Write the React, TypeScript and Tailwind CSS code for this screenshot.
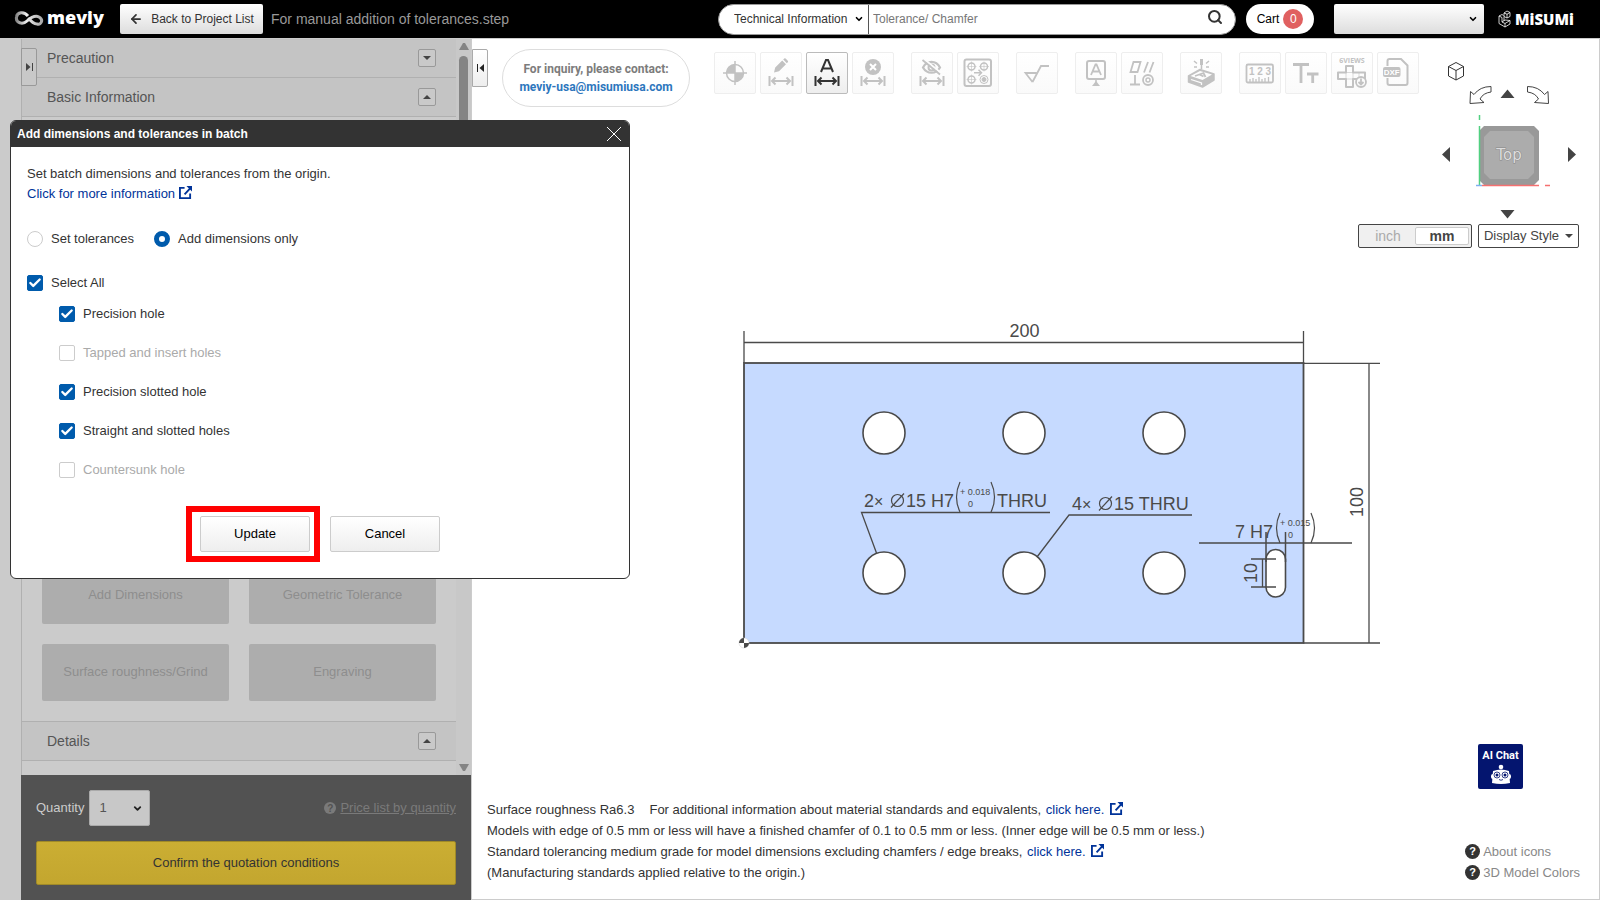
import { useState } from "react";
import type { ReactNode } from "react";
import { ArrowLeft, Check, ChevronDown, Search } from "lucide-react";

type Tool = {
	name: string;
	icon: ReactNode;
	active?: boolean;
};

type HoleOption = {
	id: string;
	label: string;
	disabled?: boolean;
};

const dimArrow = (
	<g strokeWidth="2">
		<path d="M9.5 24v10M32.5 24v10M12 29h18" />
		<path d="M15.5 25.5L12 29l3.5 3.5M26.5 25.5L30 29l-3.5 3.5" />
	</g>
);

const toolGroups: Tool[][] = [
	[
		{
			name: "Origin",
			icon: (
				<>
					<circle cx="21" cy="21" r="8.5" strokeWidth="1.5" />
					<path d="M21 9v24M9 21h24" strokeWidth="1.5" />
					<path
						d="M21 21V12.500A8.500 8.500 0 0 0 12.500 21zM21 21v8.500A8.500 8.500 0 0 0 29.500 21z"
						fill="currentColor"
						stroke="none"
					/>
				</>
			),
		},
		{
			name: "Edit dimension",
			icon: (
				<>
					<path
						d="M14 20.500l1.200-5 7-7 3.800 3.800-7 7zM23.200 7.600l1-1a1 1 0 0 1 1.400 0l2.200 2.200a1 1 0 0 1 0 1.400l-1 1z"
						fill="currentColor"
						stroke="none"
					/>
					{dimArrow}
				</>
			),
		},
		{
			name: "Add dimensions in batch",
			active: true,
			icon: (
				<>
					<path d="M15 20l5-12h2l5 12M16.500 16.500h9" strokeWidth="2" />
					{dimArrow}
				</>
			),
		},
		{
			name: "Delete dimension",
			icon: (
				<>
					<circle cx="21" cy="15" r="8" fill="currentColor" stroke="none" />
					<path
						d="M18 12l6 6M24 12l-6 6"
						className="stroke-white"
						strokeWidth="2"
					/>
					{dimArrow}
				</>
			),
		},
	],
	[
		{
			name: "Hide dimension",
			icon: (
				<>
					<path
						d="M12 15.500c4-7.500 13-7.500 17 0c-4 7-13 7-17 0z"
						strokeWidth="2.200"
					/>
					<circle cx="20.500" cy="15.500" r="3" strokeWidth="2" />
					<path d="M13 7l17 14" className="stroke-[#fdfdfd]" strokeWidth="1.800" />
					<path d="M11.500 8L29 22.500" strokeWidth="1.800" />
					{dimArrow}
				</>
			),
		},
		{
			name: "Hole groups",
			icon: (
				<>
					<rect x="7.500" y="7.500" width="26.500" height="26.500" rx="2" strokeWidth="2" />
					<circle cx="14.500" cy="14.500" r="3.500" strokeWidth="1.500" />
					<circle cx="27" cy="14.500" r="3.500" strokeWidth="1.500" />
					<circle cx="14.500" cy="27.500" r="3.500" strokeWidth="1.500" />
					<circle cx="27" cy="27.500" r="4" strokeWidth="1" />
					<circle cx="27" cy="27.500" r="2" fill="currentColor" strokeWidth="1" />
					<path
						d="M14.500 9.500v10M9.500 14.500h10M27 9.500v10M22 14.500h10M14.500 22.500v10M9.500 27.500h10"
						strokeWidth=".6"
					/>
					<path d="M17 20.700h7M21.500 17.700l3 3-3 3" strokeWidth="1.500" />
				</>
			),
		},
	],
	[
		{
			name: "Surface roughness",
			icon: <path d="M16.500 30L9.500 21h11M16.500 30L25 14h8" strokeWidth="1.800" />,
		},
	],
	[
		{
			name: "Datum",
			icon: (
				<>
					<rect x="12" y="9" width="18" height="18" rx="2" strokeWidth="2" />
					<path d="M16 23l4.500-10.500h1L26 23M17.500 19.500h7" strokeWidth="1.800" />
					<path d="M21 27v3" strokeWidth="1.500" />
					<path d="M21 29l4 5h-8z" fill="currentColor" stroke="none" />
				</>
			),
		},
		{
			name: "Geometric tolerance",
			icon: (
				<>
					<path
						d="M12.500 10h7l-3 10h-7zM27 10l-4 10.500M32.500 10l-4 10.500M9 32.500h10M14 32.500V23"
						strokeWidth="1.800"
					/>
					<circle cx="27" cy="28" r="5" strokeWidth="1.800" />
					<circle cx="27" cy="28" r="2" strokeWidth="1.500" />
				</>
			),
		},
	],
	[
		{
			name: "Engraving",
			icon: (
				<>
					<path
						d="M8.500 24L20 17.500l14 4.500v6l-11.500 7-14-5z"
						fill="currentColor"
						strokeWidth="1.500"
						strokeLinejoin="round"
					/>
					<path d="M10.500 24L20 19l12 3.500-9.500 5.500z" className="fill-[#fdfdfd]" stroke="none" />
					<path d="M11 27.500l10.500 3.500v2" className="stroke-[#fdfdfd]" strokeWidth="1.300" />
					<path d="M15 24l8.500-3 2 4M19.500 22.500l4 2" strokeWidth="1.800" />
					<path d="M21.500 7v6" strokeWidth="3" />
					<path
						d="M21.500 12v5M17 11.500l-3-2.500M26 11.500l3-2.500M17 15h-3M26 15h3"
						strokeWidth="1.500"
					/>
				</>
			),
		},
	],
	[
		{
			name: "Numeric values",
			icon: (
				<>
					<rect x="7.500" y="12.500" width="26.500" height="18" rx="1.500" strokeWidth="1.800" />
					<text
						x="21"
						y="23"
						textAnchor="middle"
						className="fill-current font-['Liberation_Sans'] text-[10px] font-bold"
						stroke="none"
					>
						1 2 3
					</text>
					<path
						d="M11 30v-3M14 30v-4M17 30v-3M20 30v-5M23 30v-3M26 30v-4M29.500 30v-5"
						strokeWidth="1.300"
					/>
				</>
			),
		},
		{
			name: "Text size",
			icon: (
				<path d="M8 12.500h16M16 12.500V31M22 22h11.500M27.700 22v9" strokeWidth="2.800" />
			),
		},
		{
			name: "Six views",
			icon: (
				<>
					<text
						x="21"
						y="11"
						textAnchor="middle"
						className="fill-current font-['Open_Sans'] text-[7px] font-bold"
						stroke="none"
					>
						6VIEWS
					</text>
					<path
						d="M15 14h7v6.500h12V27H22v8h-7v-8H7v-6.500h8z"
						strokeWidth="2"
						strokeLinejoin="round"
					/>
					<path d="M15 20.500h7V27h-7zM28 20.500V27" strokeWidth=".6" />
					<circle
						cx="30"
						cy="30"
						r="5"
						className="fill-[#fbfbfb]"
						strokeWidth="1.800"
					/>
					<path d="M30 26.500v6M27.500 30l2.500 2.500 2.500-2.500" strokeWidth="1.800" />
				</>
			),
		},
		{
			name: "Export DXF",
			icon: (
				<>
					<path
						d="M10.500 14V9q0-2 2-2H24l6.500 6.500V31q0 2-2 2h-16q-2 0-2-2v-5"
						strokeWidth="2"
					/>
					<rect x="6" y="15" width="17.500" height="10" rx="2" fill="currentColor" stroke="none" />
					<text
						x="14.700"
						y="23"
						textAnchor="middle"
						className="fill-white font-['Liberation_Sans'] text-[8px] font-bold"
						stroke="none"
					>
						DXF
					</text>
				</>
			),
		},
	],
];

const holeOptions: HoleOption[] = [
	{ id: "precision", label: "Precision hole" },
	{ id: "tapped", label: "Tapped and insert holes", disabled: true },
	{ id: "slotted", label: "Precision slotted hole" },
	{ id: "straight", label: "Straight and slotted holes" },
	{ id: "countersunk", label: "Countersunk hole", disabled: true },
];

const holes = [
	[884, 433],
	[1024, 433],
	[1164, 433],
	[884, 573],
	[1024, 573],
	[1164, 573],
];

function ExternalIcon({ className }: { className: string }) {
	return (
		<svg
			viewBox="0 0 14 14"
			className={`inline-block size-[13px] align-[-1px] ${className}`}
			fill="none"
			stroke="currentColor"
			strokeWidth="2"
		>
			<path d="M6 2H1v11h11V8M6 9l6-6.500" />
			<path d="M8 0h6v6z" fill="currentColor" stroke="none" />
		</svg>
	);
}

function HelpIcon({ className }: { className: string }) {
	return (
		<span
			className={`flex items-center justify-center rounded-full font-bold ${className}`}
		>
			?
		</span>
	);
}

function Header() {
	return (
		<header className="flex h-[39px] shrink-0 items-center border-b border-[#ccc] bg-black">
			<a href="#" className="ml-[14px] flex items-center gap-[3px] text-white">
				<svg viewBox="0 0 30 16" className="h-4 w-[30px]" fill="none">
					<defs>
						<linearGradient id="loop" x1="0" x2="1">
							<stop offset="0" stopColor="#888" />
							<stop offset=".4" stopColor="#eee" />
							<stop offset="1" stopColor="#aaa" />
						</linearGradient>
					</defs>
					<path
						d="M14 5C10 0 3 1 2.500 6c-1 6 6 8 10.500 4s8-6 12-4c5 3 2 8-2 7c-3 0-5-2-9-6"
						stroke="url(#loop)"
						strokeWidth="3"
					/>
				</svg>
				<span className="w-[59px] pb-1 font-['Open_Sans'] text-[18px] leading-6 font-extrabold">
					meviy
				</span>
			</a>
			<button
				type="button"
				className="ml-[14px] flex h-[30px] w-[143px] shrink-0 items-center justify-center gap-2 rounded-xs bg-linear-to-b from-white to-[#ddd] text-[12px] text-[#333]"
			>
				<ArrowLeft size={14} strokeWidth={3} />
				Back to Project List
			</button>
			<span className="ml-2 text-[14px] whitespace-nowrap text-[#999]">
				For manual addition of tolerances.step
			</span>
			<div className="ml-auto flex h-[31px] w-[518px] shrink-0 items-center overflow-hidden rounded-full border border-[#999] bg-white">
				<div className="relative flex h-full w-[150px] items-center border-r border-[#555]">
					<select
						aria-label="Search category"
						className="h-full w-full appearance-none pl-[15px] text-[12px] text-[#333] outline-none"
					>
						<option>Technical Information</option>
					</select>
					<ChevronDown
						size={10}
						strokeWidth={4}
						className="pointer-events-none absolute right-1"
					/>
				</div>
				<input
					type="text"
					aria-label="Search"
					placeholder="Tolerance/ Chamfer"
					className="h-full min-w-0 flex-1 px-1 text-[12px] outline-none placeholder:text-[#777]"
				/>
				<button type="button" aria-label="Search" className="mr-3 mb-1 text-[#333]">
					<Search size={16} strokeWidth={3} />
				</button>
			</div>
			<button
				type="button"
				className="ml-[10px] flex h-[30px] w-[68px] shrink-0 items-center justify-center gap-1 rounded-full bg-white text-[12px]"
			>
				Cart
				<span className="flex size-5 items-center justify-center rounded-full bg-[#e06060] text-white">
					0
				</span>
			</button>
			<div className="relative ml-5 flex h-[30px] w-[150px] shrink-0 items-center">
				<select
					aria-label="Account"
					className="h-full w-full appearance-none rounded-xs bg-linear-to-b from-white to-[#ddd] outline-none"
				>
					<option></option>
				</select>
				<ChevronDown
					size={10}
					strokeWidth={4}
					className="pointer-events-none absolute right-[6px]"
				/>
			</div>
			<a href="#" className="mr-7 ml-[14px] flex shrink-0 items-center gap-1 text-white">
				<svg
					viewBox="0 0 13 18"
					className="h-[18px] w-[13px]"
					fill="none"
					stroke="currentColor"
					strokeWidth=".8"
				>
					<path d="M1 6l3 1.500V12l3 1.500V17l-6-3.500zM7 13.500l5-3V14l-5 3M4 12l3-2 5 .500M6 3l3-2 3 1.500v4L9 8 6 6.500zM9 4v4M6 3l3 1.200L12 2.500M6 6.500V11M1 6l3-1.500 1.500 1" />
				</svg>
				<span className="w-[57px] font-['Open_Sans'] text-[15px] leading-5 font-extrabold">
					MiSUMi
				</span>
			</a>
		</header>
	);
}

function SectionHeader({ title, open }: { title: string; open: boolean }) {
	return (
		<div className="flex h-[39px] items-center justify-between border-b border-[#b0b0b0] bg-[#c4c4c4] pr-5 pl-[25px] text-[14px] text-[#555]">
			<h2>{title}</h2>
			<button
				type="button"
				aria-label={`Toggle ${title}`}
				className="flex size-[18px] items-center justify-center rounded-xs border border-[#999] bg-[#c9c9c9]"
			>
				<svg viewBox="0 0 8 4" className="h-1 w-2 fill-[#444]">
					<path d={open ? "M0 4L4 0l4 4z" : "M0 0l4 4 4-4z"} />
				</svg>
			</button>
		</div>
	);
}

function ActionButton({ children }: { children: ReactNode }) {
	return (
		<button
			type="button"
			disabled
			className="h-[57px] rounded-xs bg-[#adadad] pb-[2px] text-[13px] text-[#8e8e8e]"
		>
			{children}
		</button>
	);
}

function Sidebar() {
	return (
		<aside className="flex w-[472px] shrink-0 bg-[#cbcbcb]">
			<div className="w-[21px] shrink-0" />
			<div className="relative flex min-w-0 flex-1 flex-col border-r border-[#ccc]">
				<div className="flex min-h-0 flex-1 border-l border-[#b0b0b0]">
					<div className="flex min-w-0 flex-1 flex-col">
						<SectionHeader title="Precaution" open={false} />
						<SectionHeader title="Basic Information" open />
						<div className="mt-auto grid grid-cols-2 gap-5 px-5 pb-5">
							<ActionButton>Add Dimensions</ActionButton>
							<ActionButton>Geometric Tolerance</ActionButton>
							<ActionButton>Surface roughness/Grind</ActionButton>
							<ActionButton>Engraving</ActionButton>
						</div>
						<div className="border-t border-[#b0b0b0] pb-[14px]">
							<SectionHeader title="Details" open />
						</div>
					</div>
					<div className="flex w-[15px] flex-col items-center bg-[#c8c8c8] py-1">
						<svg viewBox="0 0 10 7" className="h-[7px] w-[10px] fill-[#848484]">
							<path d="M0 7l4-7h2l4 7z" />
						</svg>
						<div className="mt-[6px] h-[520px] w-[9px] rounded-full bg-[#848484]" />
						<svg viewBox="0 0 10 7" className="mt-auto h-[7px] w-[10px] fill-[#848484]">
							<path d="M0 0l4 7h2l4-7z" />
						</svg>
					</div>
				</div>
				<div className="bg-[#525252] px-[15px] pt-[15px] pb-[15px]">
					<div className="flex items-center">
						<label htmlFor="quantity" className="text-[13px] text-[#ccc]">
							Quantity
						</label>
						<div className="relative ml-[5px] flex h-9 w-[61px] items-center">
							<select
								id="quantity"
								className="h-full w-full appearance-none rounded-xs border border-[#aaa] bg-[#c8c8c8] pl-[9px] text-[13px] text-[#555] outline-none"
							>
								<option>1</option>
							</select>
							<ChevronDown
								size={11}
								strokeWidth={4}
								className="pointer-events-none absolute right-[7px] text-[#222]"
							/>
						</div>
						<a
							href="#"
							className="ml-auto flex items-center gap-1 text-[13px] text-[#7a7a7a]"
						>
							<HelpIcon className="size-3 bg-[#7a7a7a] text-[10px] text-[#525252]" />
							<span className="underline">Price list by quantity</span>
						</a>
					</div>
					<button
						type="button"
						className="mt-[15px] h-11 w-full rounded-xs border border-[#a08a28] bg-linear-to-b from-[#cbae33] to-[#c3a62f] text-[13px] text-[#333]"
					>
						Confirm the quotation conditions
					</button>
				</div>
				<button
					type="button"
					aria-label="Expand panel"
					className="absolute top-[9px] left-0 flex h-[38px] w-4 items-center justify-center rounded-r-xs border border-[#999] bg-[#c8c8c8]"
				>
					<svg viewBox="0 0 7 8" className="h-2 w-[7px] fill-[#444]">
						<path d="M0 0l4.500 4L0 8zM6 0h1v8H6z" />
					</svg>
				</button>
			</div>
		</aside>
	);
}

function Toolbar() {
	return (
		<div className="flex items-start pl-[30px]">
			<div className="mt-[10px] flex h-[58px] w-[188px] shrink-0 flex-col items-center justify-center rounded-full border border-[#ddd] font-['Roboto',sans-serif] text-[12px] leading-[18px] font-bold whitespace-nowrap text-[#7c7c7c]">
				<span>For inquiry, please contact:</span>
				<a href="#" className="text-[#2d76bd]">
					meviy-usa@misumiusa.com
				</a>
			</div>
			<div className="mt-[13px] ml-6 flex gap-[17px]">
				{toolGroups.map((group, i) => (
					<div key={i} className="flex gap-1">
						{group.map(tool => (
							<button
								key={tool.name}
								type="button"
								aria-label={tool.name}
								className={`size-[42px] rounded-xs border ${
									tool.active
										? "border-[#bbb] bg-linear-to-b from-white to-[#eee] text-[#333]"
										: "border-[#eee] bg-linear-to-b from-white to-[#fafafa] text-[#c2c2c2]"
								}`}
							>
								<svg
									viewBox="1 1 40 40"
									className="size-10"
									fill="none"
									stroke="currentColor"
								>
									{tool.icon}
								</svg>
							</button>
						))}
					</div>
				))}
			</div>
		</div>
	);
}

function Drawing() {
	return (
		<svg
			viewBox="692 256 688 394"
			className="h-[394px] w-[688px] font-['Liberation_Sans'] text-[18px]"
			fill="none"
			stroke="#4a4a4a"
		>
			<rect x="744" y="363" width="559.500" height="280" fill="#c6daff" strokeWidth="1.800" />
			{holes.map(([cx, cy]) => (
				<circle key={`${cx}-${cy}`} cx={cx} cy={cy} r="21" fill="white" strokeWidth="1.600" />
			))}
			<rect x="1266" y="549.500" width="19.500" height="47.500" rx="9.700" fill="white" strokeWidth="1.600" />
			<path d="M744 331v32M1303.500 331v32M744 342.500h559.500" strokeWidth="1.300" />
			<path d="M1303.500 363.300H1380M1303.500 643H1380M1369 363v280" strokeWidth="1.300" />
			<path d="M876.500 553L861.500 512.500H1050" strokeWidth="1.300" />
			<path d="M1037 557l32-42h123" strokeWidth="1.300" />
			<path d="M1199 543h153M1266 532v30M1285.500 532v30" strokeWidth="1.500" />
			<path d="M1251 559h25M1251 587h25M1262.500 559v28" strokeWidth="1.300" />
			<path d="M960 482q-7 15 0 30M991 482q7 15 0 30" strokeWidth="1.200" />
			<path d="M1280 513q-7 15 0 30M1311 513q7 15 0 30" strokeWidth="1.200" />
			<g strokeWidth="1.200">
				<circle cx="897.500" cy="500.500" r="6" />
				<path d="M891 507.500l13-14" />
				<circle cx="1105.500" cy="503.500" r="6" />
				<path d="M1099 510.500l13-14" />
			</g>
			<g fill="#4a4a4a" stroke="none">
				<text x="1024.500" y="337" textAnchor="middle">200</text>
				<text transform="translate(1363 502) rotate(-90)" textAnchor="middle">100</text>
				<text transform="translate(1257 573) rotate(-90)" textAnchor="middle">10</text>
				<text x="864" y="507">2</text>
				<text x="874" y="507" className="text-[16px]">×</text>
				<text x="906" y="507">15 H7</text>
				<text x="997" y="507">THRU</text>
				<text x="1072" y="510">4</text>
				<text x="1082" y="510" className="text-[16px]">×</text>
				<text x="1114" y="510">15 THRU</text>
				<text x="1235" y="538">7 H7</text>
				<g className="text-[9px]">
					<text x="960" y="495">+ 0.018</text>
					<text x="968" y="507">0</text>
					<text x="1280" y="526">+ 0.015</text>
					<text x="1288" y="538">0</text>
				</g>
			</g>
			<circle cx="744" cy="643" r="5" fill="white" stroke="#ccc" strokeWidth=".5" />
			<path d="M744 643v-5a5 5 0 0 0-5 5zM744 643v5a5 5 0 0 0 5-5z" fill="#4a4a4a" stroke="none" />
		</svg>
	);
}

function ViewCube() {
	return (
		<svg viewBox="1436 60 144 160" className="h-[160px] w-[144px]" fill="none">
			<path
				d="M1456 62.500l7.500 4v9.500l-7.500 4-7.500-4v-9.500zM1448.500 66.500l7.500 4 7.500-4M1456 70.500V80"
				stroke="#333"
			/>
			<path
				d="M1491 86.500v5.500q-8 1-11 7l4 3.500-14 1 .500-12 3.500 3q6-8 17-8zM1527.500 86.500v5.500q8 1 11 7l-4 3.500 14 1-.500-12-3.500 3q-6-8-17-8z"
				stroke="#444"
			/>
			<path
				d="M1500.500 98l7-8.500 7 8.500zM1500.500 210l7 8.500 7-8.500zM1450 147v15l-8-7.500zM1568 147v15l8-7.500z"
				fill="#444"
			/>
			<path d="M1484 126h50l5 5v49l-5 5h-50l-5-5v-49z" fill="#999" />
			<path d="M1490 131h38l6 6v36l-6 6h-38l-6-6v-36z" fill="#acacac" />
			<path d="M1479.500 115v5M1479.500 126v59" stroke="#50d080" strokeWidth="1.500" />
			<path d="M1482 185.500h57M1545 185.500h5" stroke="#f57070" strokeWidth="1.500" />
			<path d="M1476 185.500h6" stroke="#80b0f0" strokeWidth="1.500" />
			<text
				x="1509"
				y="160"
				textAnchor="middle"
				className="fill-[#ddd] stroke-[#888] font-['DejaVu_Sans'] text-[15px] [paint-order:stroke]"
				strokeWidth="1"
			>
				Top
			</text>
		</svg>
	);
}

function AiChat() {
	return (
		<button
			type="button"
			className="absolute right-[76px] bottom-[10px] flex size-[45px] flex-col items-center rounded-xs bg-[#04156f] pt-1 text-white"
		>
			<span className="font-['Roboto',sans-serif] text-[11px] leading-[16px] font-bold whitespace-nowrap">
				AI Chat
			</span>
			<svg viewBox="0 0 22 20" className="h-5 w-[22px]">
				<circle cx="11" cy="3" r="2.300" fill="white" />
				<rect x="1" y="10" width="20" height="5" rx="2" fill="white" />
				<path d="M3 7q8-3 16 0l1 12q-9 2-18 0z" fill="white" />
				<g fill="white" stroke="#04156f" strokeWidth=".8">
					<circle cx="7" cy="11" r="3" />
					<circle cx="15" cy="11" r="3" />
					<path d="M9 15.500q2 1.500 4 0" fill="none" />
				</g>
				<g fill="#04156f">
					<circle cx="7" cy="11" r="1.500" />
					<circle cx="15" cy="11" r="1.500" />
				</g>
			</svg>
		</button>
	);
}

function Viewer() {
	return (
		<main className="relative flex min-w-0 flex-1 flex-col border-r border-b border-[#ccc] bg-white">
			<Toolbar />
			<div className="relative flex min-h-0 flex-1 items-center justify-center">
				<Drawing />
				<AiChat />
			</div>
			<div className="flex items-end justify-between pr-[19px] pb-4 pl-[15px] text-[13px] leading-[21px]">
				<div className="text-[#333]">
					<p>
						Surface roughness Ra6.3
						<span className="ml-[15px]">
							For additional information about material standards and
							equivalents,{" "}
						</span>
						<a href="#" className="ml-px text-[#039]">
							click here. <ExternalIcon className="ml-[2px]" />
						</a>
					</p>
					<p>
						Models with edge of 0.5 mm or less will have a finished chamfer of
						0.1 to 0.5 mm or less. (Inner edge will be 0.5 mm or less.)
					</p>
					<p>
						Standard tolerancing medium grade for model dimensions excluding
						chamfers / edge breaks,{" "}
						<a href="#" className="ml-px text-[#039]">
							click here. <ExternalIcon className="ml-[2px]" />
						</a>
					</p>
					<p>(Manufacturing standards applied relative to the origin.)</p>
				</div>
				<div className="text-[#888]">
					{["About icons", "3D Model Colors"].map(text => (
						<a key={text} href="#" className="flex items-center gap-[3px]">
							<HelpIcon className="size-[15px] bg-[#333] text-[11px] text-white" />
							{text}
						</a>
					))}
				</div>
			</div>
			<button
				type="button"
				aria-label="Collapse panel"
				className="absolute top-[10px] left-0 flex h-[38px] w-4 items-center justify-center rounded-r-xs border border-[#aaa] bg-linear-to-b from-white to-[#eee]"
			>
				<svg viewBox="0 0 7 8" className="h-2 w-[7px] fill-[#222]">
					<path d="M7 0L2.500 4 7 8zM0 0h1v8H0z" />
				</svg>
			</button>
			<div className="absolute top-[21px] right-[19px] flex flex-col items-end gap-1">
				<ViewCube />
				<div className="flex gap-[6px] pr-px text-[13px] text-[#444]">
					<div className="flex h-6 w-[114px] rounded-xs border border-[#444] bg-[#f0f0f0] p-[2px]">
						<button type="button" className="flex-1 text-[14px] leading-4 text-[#aaa]">
							inch
						</button>
						<button
							type="button"
							className="w-[54px] rounded-xs border border-[#ccc] bg-white text-[14px] leading-4 font-bold"
						>
							mm
						</button>
					</div>
					<button
						type="button"
						className="flex h-6 w-[101px] items-center justify-center gap-[6px] rounded-xs border border-[#444] whitespace-nowrap"
					>
						Display Style
						<svg viewBox="0 0 8 4" className="h-1 w-2 fill-[#444]">
							<path d="M0 0l4 4 4-4z" />
						</svg>
					</button>
				</div>
			</div>
		</main>
	);
}

type CheckBoxProps = {
	id: string;
	label: string;
	checked: boolean;
	disabled?: boolean;
	onChange: () => void;
};

function CheckBox({ id, label, checked, disabled, onChange }: CheckBoxProps) {
	return (
		<div className="flex items-center gap-2">
			<div className="relative size-4">
				<input
					id={id}
					type="checkbox"
					checked={checked}
					disabled={disabled}
					onChange={onChange}
					className="block size-4 appearance-none rounded-xs border border-[#ccc] bg-white checked:border-[#005bac] checked:bg-[#005bac]"
				/>
				{checked && (
					<Check
						size={14}
						strokeWidth={4}
						className="pointer-events-none absolute top-px left-px text-white"
					/>
				)}
			</div>
			<label htmlFor={id} className={disabled ? "text-[#aaa]" : ""}>
				{label}
			</label>
		</div>
	);
}

function BatchDialog() {
	const [mode, setMode] = useState("dimensions");
	const [selected, setSelected] = useState(["precision", "slotted", "straight"]);

	const enabled = holeOptions.filter(o => !o.disabled).map(o => o.id);
	const allSelected = enabled.every(id => selected.includes(id));

	const toggle = (id: string) =>
		setSelected(prev =>
			prev.includes(id) ? prev.filter(s => s !== id) : [...prev, id],
		);

	return (
		<div
			role="dialog"
			aria-labelledby="dialog-title"
			className="absolute top-[120px] left-[10px] w-[620px] overflow-hidden rounded-md border border-[#333] bg-white text-[13px] leading-5 text-[#333]"
		>
			<div className="flex h-[26px] items-center justify-between bg-[#333] pr-[7px] pl-[6px] text-white">
				<h1 id="dialog-title" className="text-[12px] font-bold">
					Add dimensions and tolerances in batch
				</h1>
				<button type="button" aria-label="Close">
					<svg viewBox="0 0 16 16" className="size-4" stroke="currentColor">
						<path d="M1 1l14 14M15 1L1 15" />
					</svg>
				</button>
			</div>
			<div className="px-4 pt-4 pb-[26px]">
				<p className="leading-[21px]">
					Set batch dimensions and tolerances from the origin.
				</p>
				<a href="#" className="block text-[#039]">
					Click for more information
					<ExternalIcon className="ml-1" />
				</a>
				<div className="mt-[25px] flex gap-5">
					{[
						["tolerances", "Set tolerances"],
						["dimensions", "Add dimensions only"],
					].map(([value, label]) => (
						<label key={value} className="flex items-center gap-2">
							<input
								type="radio"
								name="mode"
								value={value}
								checked={mode === value}
								onChange={() => setMode(value)}
								className="size-4 appearance-none rounded-full border border-[#ccc] checked:border-[5px] checked:border-[#005bac]"
							/>
							{label}
						</label>
					))}
				</div>
				<div className="mt-6">
					<CheckBox
						id="all"
						label="Select All"
						checked={allSelected}
						onChange={() => setSelected(allSelected ? [] : enabled)}
					/>
				</div>
				<div className="mt-[11px] ml-8 flex flex-col gap-[19px]">
					{holeOptions.map(option => (
						<CheckBox
							key={option.id}
							id={option.id}
							label={option.label}
							disabled={option.disabled}
							checked={selected.includes(option.id)}
							onChange={() => toggle(option.id)}
						/>
					))}
				</div>
				<div className="mt-9 flex justify-center gap-5 text-black">
					<div className="relative">
						<button
							type="button"
							className="block h-9 w-[110px] rounded-xs border border-[#ccc] bg-linear-to-b from-white to-[#eee]"
						>
							Update
						</button>
						<div className="pointer-events-none absolute -top-[10px] -right-[10px] -bottom-[10px] -left-[14px] border-6 border-[#f00]" />
					</div>
					<button
						type="button"
						className="h-9 w-[110px] rounded-xs border border-[#ccc] bg-linear-to-b from-white to-[#eee]"
					>
						Cancel
					</button>
				</div>
			</div>
		</div>
	);
}

export default function App() {
	return (
		<div className="relative flex h-screen flex-col overflow-hidden font-['Liberation_Sans',Arial,sans-serif]">
			<Header />
			<div className="flex min-h-0 flex-1">
				<Sidebar />
				<Viewer />
			</div>
			<BatchDialog />
		</div>
	);
}
